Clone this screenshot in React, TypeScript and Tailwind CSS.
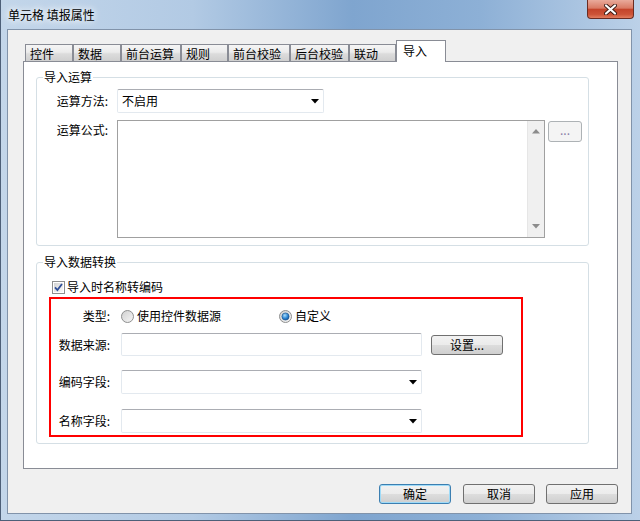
import React from 'react';

const TABS = [
  { label: '控件', w: 'w-[48px]' },
  { label: '数据', w: 'w-[48px]' },
  { label: '前台运算', w: 'w-[60px]' },
  { label: '规则', w: 'w-[47px]' },
  { label: '前台校验', w: 'w-[62px]' },
  { label: '后台校验', w: 'w-[59px]' },
  { label: '联动', w: 'w-[47px]' },
];

const btnBg =
  'bg-[linear-gradient(#f2f2f2_0%,#ebebeb_50%,#dddddd_50%,#cfcfcf_100%)]';

const Arrow = () => (
  <svg width="8" height="5" viewBox="0 0 8 5" className="shrink-0">
    <path d="M0 0 H8 L4 4.5 Z" fill="#000" />
  </svg>
);

const Select: React.FC<{ w: string; text?: string }> = ({ w, text }) => (
  <div
    className={`flex h-[24px] items-center justify-between rounded-[2px] border border-[#e3e9ef] border-t-[#abadb3] bg-white pl-[4px] pr-[4px] ${w}`}
  >
    <span>{text}</span>
    <Arrow />
  </div>
);

const Radio: React.FC<{ checked?: boolean }> = ({ checked }) => (
  <svg width="13" height="13" viewBox="0 0 13 13" className="shrink-0">
    <defs>
      <linearGradient id="rg" x1="0" y1="0" x2="1" y2="1">
        <stop offset="0" stopColor="#cfcfcf" />
        <stop offset="1" stopColor="#f7f7f7" />
      </linearGradient>
      <radialGradient id="rb" cx="0.4" cy="0.35" r="0.7">
        <stop offset="0" stopColor="#a9dcfb" />
        <stop offset="0.6" stopColor="#2d86d2" />
        <stop offset="1" stopColor="#0d4f99" />
      </radialGradient>
    </defs>
    <circle cx="6.5" cy="6.5" r="6" fill="url(#rg)" stroke="#8e8f8f" />
    {checked && <circle cx="6.5" cy="6.5" r="3.6" fill="url(#rb)" stroke="#1b4f86" strokeWidth="0.6" />}
  </svg>
);

const WinButton: React.FC<{ label: string; def?: boolean; w?: string }> = ({
  label,
  def,
  w = 'w-[72px]',
}) => (
  <div
    className={`flex h-[20px] items-center justify-center rounded-[3px] border ${btnBg} ${w} ${
      def ? 'border-[#3c7fb1] shadow-[inset_0_0_0_1px_#9fdbf8]' : 'border-[#707070]'
    }`}
  >
    {label}
  </div>
);

export default function App() {
  return (
    <div className="flex h-[521px] w-[640px] flex-col overflow-hidden border-b border-l border-[#4d5f78] bg-[linear-gradient(90deg,#c3d6ea_0%,#b2cae4_30%,#7fa5cf_55%,#8db0d6_75%,#bcd1e8_100%)] font-['Noto_Sans_CJK_SC','Noto_Sans',sans-serif] text-[12px] leading-[16px] text-black">
      {/* title bar */}
      <div className="flex h-[29px] shrink-0 items-start justify-between">
        <span className="pl-[7px] pt-[7px] [text-shadow:0_0_6px_#fff,0_0_10px_#fff]">
          单元格 填报属性
        </span>
        <div className="mr-[6px] flex h-[19px] w-[47px] items-center justify-center rounded-b-[4px] border border-t-0 border-[#6a2c22] bg-[linear-gradient(#e9aa9b_0%,#d97a64_45%,#c4442b_52%,#cc5337_80%,#e27d5f_100%)]">
          <svg width="13" height="11" viewBox="0 0 13 11">
            <path d="M2 1.5 L11 9.5 M11 1.5 L2 9.5" stroke="#3b1a14" strokeWidth="4" strokeLinecap="round" />
            <path d="M2 1.5 L11 9.5 M11 1.5 L2 9.5" stroke="#fff" strokeWidth="2.2" strokeLinecap="round" />
          </svg>
        </div>
      </div>

      {/* client area */}
      <div className="ml-[6px] flex h-[485px] w-[625px] flex-col border border-[#8193aa] bg-[#f0f0f0]">
        <div className="ml-[15px] mt-[11px] flex w-[595px] flex-col">
          {/* tabs */}
          <div className="flex h-[20px] items-end pl-[2px]">
            {TABS.map((t) => (
              <div
                key={t.label}
                className={`flex h-[17px] items-center border-x border-t border-[#898c95] bg-[linear-gradient(#f5f5f5_0%,#ebebeb_45%,#dcdcdc_55%,#cfcfcf_100%)] pl-[4px] pt-[1px] ${t.w}`}
              >
                {t.label}
              </div>
            ))}
            <div className="relative z-10 -mb-px flex h-[22px] w-[50px] items-start border-x border-t border-[#898c95] bg-white pl-[6px] pt-[2px]">
              导入
            </div>
          </div>

          {/* panel */}
          <div className="flex h-[408px] flex-col border border-[#898c95] bg-white pl-[12px]">
            <fieldset className="mt-[7px] w-[553px] min-w-0 rounded-[3px] border border-[#d5dfe5] px-0 pb-[7px]">
              <legend className="ml-[6px] px-[1px]">导入运算</legend>
              <div className="mt-[4px] flex h-[24px] items-center">
                <div className="w-[71px] text-right">运算方法:</div>
                <div className="ml-[9px]">
                  <Select w="w-[207px]" text="不启用" />
                </div>
              </div>
              <div className="mt-[7px] flex items-start">
                <div className="w-[71px] pt-[2px] text-right">运算公式:</div>
                <div className="ml-[9px] flex h-[118px] w-[428px] justify-end border border-[#a0a0a0] bg-white">
                  <div className="flex w-[17px] flex-col items-center justify-between border-l border-[#e6e6e6] bg-[#f0f0f0] py-[8px]">
                    <svg width="8" height="5" viewBox="0 0 8 5">
                      <path d="M0 4.5 H8 L4 0 Z" fill="#8c8c8c" />
                    </svg>
                    <svg width="8" height="5" viewBox="0 0 8 5">
                      <path d="M0 0 H8 L4 4.5 Z" fill="#8c8c8c" />
                    </svg>
                  </div>
                </div>
                <div className="ml-[3px] mt-[1px] flex h-[21px] w-[34px] items-center justify-center rounded-[3px] border border-[#adb2b5] bg-[#f4f4f4] pb-[4px] text-[#8a7fa8]">
                  ...
                </div>
              </div>
            </fieldset>

            <fieldset className="mt-[8px] w-[553px] min-w-0 rounded-[3px] border border-[#d5dfe5] px-0 pb-[6px]">
              <legend className="ml-[6px] px-[1px]">导入数据转换</legend>
              <div className="ml-[15px] mt-[9px] flex h-[16px] items-center">
                <svg width="13" height="13" viewBox="0 0 13 13" className="shrink-0">
                  <defs>
                    <linearGradient id="cg" x1="0" y1="0" x2="1" y2="1">
                      <stop offset="0" stopColor="#d3d3d3" />
                      <stop offset="1" stopColor="#fafafa" />
                    </linearGradient>
                  </defs>
                  <rect x="0.5" y="0.5" width="12" height="12" fill="#fff" stroke="#8e8f8f" />
                  <rect x="2" y="2" width="9" height="9" fill="url(#cg)" />
                  <path d="M3 6.3 L5.4 9 L10 3" fill="none" stroke="#2f4f98" strokeWidth="1.8" />
                </svg>
                <span className="ml-[2px]">导入时名称转编码</span>
              </div>

              <div className="ml-[12px] mt-[2px] flex h-[140px] w-[474px] flex-col border-2 border-[#ff0000]">
                <div className="mt-[9px] flex h-[16px] items-center">
                  <div className="w-[59px] text-right">类型:</div>
                  <div className="ml-[11px] flex w-[158px] items-center">
                    <Radio />
                    <span className="ml-[3px]">使用控件数据源</span>
                  </div>
                  <div className="flex items-center">
                    <Radio checked />
                    <span className="ml-[3px]">自定义</span>
                  </div>
                </div>
                <div className="mt-[9px] flex h-[23px] items-center">
                  <div className="w-[59px] text-right">数据来源:</div>
                  <div className="ml-[11px] h-[23px] w-[301px] rounded-[2px] border border-[#e3e9ef] border-t-[#abadb3] bg-white" />
                  <div className="ml-[9px]">
                    <WinButton label="设置..." />
                  </div>
                </div>
                <div className="mt-[14px] flex h-[24px] items-center">
                  <div className="w-[59px] text-right">编码字段:</div>
                  <div className="ml-[11px]">
                    <Select w="w-[301px]" />
                  </div>
                </div>
                <div className="mt-[15px] flex h-[24px] items-center">
                  <div className="w-[59px] text-right">名称字段:</div>
                  <div className="ml-[11px]">
                    <Select w="w-[301px]" />
                  </div>
                </div>
              </div>
            </fieldset>
          </div>

          {/* footer */}
          <div className="mt-[15px] flex justify-end gap-[11px]">
            <div className="mr-[1px]">
              <WinButton label="确定" def />
            </div>
            <WinButton label="取消" />
            <WinButton label="应用" />
          </div>
        </div>
      </div>
    </div>
  );
}
